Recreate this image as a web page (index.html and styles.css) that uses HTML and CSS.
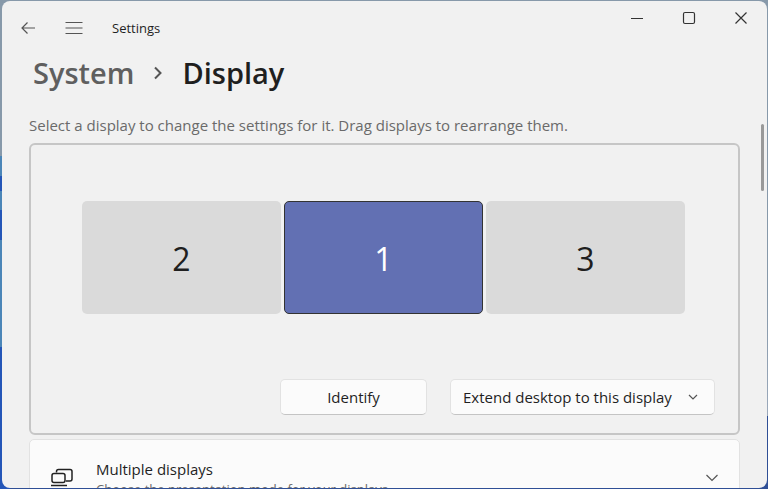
FILE: index.html
```html
<!DOCTYPE html>
<html lang="en">
<head>
    <meta charset="UTF-8">
    <meta name="viewport" content="width=device-width, initial-scale=1.0">
    <title>Settings</title>
    <link rel="stylesheet" href="styles.css">
</head>
<body>
    <div class="window">
        <header class="titlebar">
            <button type="button" class="icon-button" aria-label="Back">
                <svg width="16" height="14" viewBox="0 0 16 14"><path d="M15 7H2M7.5 1.5L2 7L7.500 12.500"/></svg>
            </button>
            <button type="button" class="icon-button" aria-label="Menu">
                <svg width="18" height="14" viewBox="0 0 18 14"><path d="M0.5 1.5H17.5M0.5 7H17.5M0.5 12.5H17.5"/></svg>
            </button>
            <span class="app-name">Settings</span>
            <div class="window-controls">
                <button type="button" class="control" aria-label="Minimize">
                    <svg width="14" height="14" viewBox="0 0 14 14"><path d="M1 7.5H13"/></svg>
                </button>
                <button type="button" class="control" aria-label="Maximize">
                    <svg width="14" height="14" viewBox="0 0 14 14"><rect x="1.5" y="1.5" width="11" height="11" rx="1.5"/></svg>
                </button>
                <button type="button" class="control" aria-label="Close">
                    <svg width="14" height="14" viewBox="0 0 14 14"><path d="M1.5 1.5L12.5 12.5M12.5 1.5L1.5 12.5"/></svg>
                </button>
            </div>
        </header>

        <main class="content">
            <h1 class="breadcrumb">
                <a href="#system">System</a>
                <svg width="10" height="14" viewBox="0 0 10 14"><path d="M2 1.5L7.5 7L2 12.5"/></svg>
                <span>Display</span>
            </h1>
            <p class="hint">Select a display to change the settings for it. Drag displays to rearrange them.</p>

            <section class="arrange">
                <div class="displays">
                    <button type="button" class="display">2</button>
                    <button type="button" class="display selected">1</button>
                    <button type="button" class="display">3</button>
                </div>
                <div class="actions">
                    <button type="button" class="identify">Identify</button>
                    <div class="dropdown">
                        <select aria-label="Display mode">
                            <option>Extend desktop to this display</option>
                            <option>Duplicate desktop</option>
                        </select>
                        <svg width="10" height="8" viewBox="0 0 10 8"><path d="M1 2L5 6L9 2"/></svg>
                    </div>
                </div>
            </section>

            <button type="button" class="card">
                <svg class="card-icon" width="24" height="20" viewBox="0 0 24 20"><path d="M6.5 4.5V3.5A2 2 0 0 1 8.500 1.500H20A2 2 0 0 1 22 3.500V11A2 2 0 0 1 20 13H16"/><rect x="2" y="5.500" width="13" height="9" rx="2"/><path d="M1 17.500H17"/></svg>
                <span class="card-text">
                    <span class="card-title">Multiple displays</span>
                    <span class="card-note">Choose the presentation mode for your displays</span>
                </span>
                <svg class="card-chevron" width="14" height="10" viewBox="0 0 14 10"><path d="M1.500 2L7 7.500L12.500 2"/></svg>
            </button>
        </main>
        <div class="scrollbar"></div>
    </div>
</body>
</html>
```

FILE: styles.css
```css
* {
    box-sizing: border-box;
}

body {
    margin: 0;
    height: 100vh;
    padding: 1px 1px 1px 2px;
    font-family: "Open Sans", "Noto Sans", sans-serif;
    font-size: 15px;
    line-height: 20px;
    color: #1f1f1f;
    background:
        linear-gradient(#8799aa 0 32%, #4b86b8 32% 36%, #2456b8 36% 39%, #4b86b8 39% 43%, #2456b8 43% 49%, #4b86b8 49% 71%, #2456b8 71%) left / 10px 100% no-repeat,
        linear-gradient(#8799aa 0 60%, #9aa8ba 85%, #2f4f96 85%);
    overflow: hidden;
}

button, select {
    font: inherit;
    color: inherit;
    padding: 0;
    border: none;
    background: none;
}

svg {
    display: block;
    flex: none;
    fill: none;
    stroke: #555;
    stroke-width: 1.2;
}

.window {
    position: relative;
    height: 100%;
    background-color: #f1f1f1;
    border-radius: 8px;
    overflow: hidden;
}

.titlebar {
    display: flex;
    height: 54px;
    padding-left: 3px;
}

.icon-button {
    width: 46px;
    display: grid;
    place-items: center;
}

.app-name {
    padding-left: 15px;
    font-size: 13px;
    line-height: 54px;
}

.window-controls {
    display: flex;
    height: 34px;
    margin-left: auto;
}

.control {
    width: 52px;
    display: grid;
    place-items: center;
}

.control svg {
    stroke: #333;
}

.content {
    padding: 0 27px;
}

.breadcrumb {
    display: flex;
    align-items: center;
    gap: 19px;
    margin: 0;
    padding-left: 4px;
    font-size: 29px;
    font-weight: 600;
    line-height: 36px;
}

.breadcrumb a {
    color: #5f5f5f;
    text-decoration: none;
}

.breadcrumb svg {
    stroke: #555;
    stroke-width: 2;
}

.hint {
    margin: 24px 0 8px;
    color: #6a6a6a;
}

.arrange {
    padding: 56px 23px 18px;
    border: 2px solid #c6c6c6;
    border-radius: 6px;
}

.displays {
    display: grid;
    grid-template-columns: repeat(3, 1fr);
    gap: 3px;
    padding: 0 30px 0 28px;
}

.display {
    aspect-ratio: 200 / 114;
    font-size: 32px;
    background-color: #dadada;
    border-radius: 5px;
    padding-top: 2px;
}

.display.selected {
    color: #fff;
    background-color: #6270b3;
    border: 1px solid #333;
}

.actions {
    display: flex;
    justify-content: flex-end;
    gap: 23px;
    margin-top: 65px;
}

.identify, .dropdown select {
    height: 36px;
    background-color: #fbfbfb;
    border: 1px solid #e2e2e2;
    border-bottom-color: #c4c4c4;
    border-radius: 5px;
}

.identify {
    width: 147px;
}

.dropdown {
    position: relative;
}

.dropdown select {
    appearance: none;
    width: 265px;
    padding: 0 12px;
}

.dropdown svg {
    position: absolute;
    right: 17px;
    top: 14px;
    pointer-events: none;
}

.card {
    display: flex;
    align-items: center;
    width: 100%;
    height: 78px;
    margin-top: 4px;
    padding: 0 20px;
    text-align: left;
    background-color: #fbfbfb;
    border: 1px solid #e2e2e2;
    border-radius: 5px;
}

.card-icon {
    stroke: #222;
    stroke-width: 1.5;
}

.card-text {
    flex: 1;
    display: grid;
    padding: 2px 0 0 22px;
}

.card-note {
    font-size: 13px;
    color: #6a6a6a;
}

.scrollbar {
    position: absolute;
    top: 123px;
    right: 3px;
    width: 3px;
    height: 67px;
    background-color: #999;
    border-radius: 2px;
}
```
